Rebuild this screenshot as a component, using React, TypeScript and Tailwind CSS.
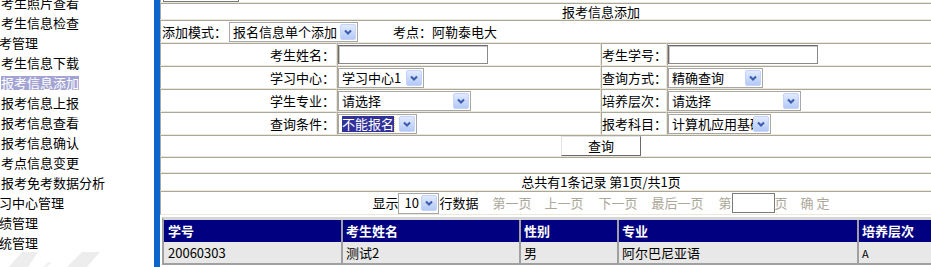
import React from "react";

type MenuItem = { text: string; sub?: boolean; active?: boolean };

const menu: MenuItem[] = [
  { text: "考生照片查看", sub: true },
  { text: "考生信息检查", sub: true },
  { text: "报考管理" },
  { text: "考生信息下载", sub: true },
  { text: "报考信息添加", sub: true, active: true },
  { text: "报考信息上报", sub: true },
  { text: "报考信息查看", sub: true },
  { text: "报考信息确认", sub: true },
  { text: "考点信息变更", sub: true },
  { text: "报考免考数据分析", sub: true },
  { text: "学习中心管理" },
  { text: "成绩管理" },
  { text: "系统管理" },
];

// inset cell border, like an old table border=1
const cellBorder =
  "border border-t-[#aca899] border-l-[#aca899] border-b-[#ebe8d9] border-r-[#ebe8d9]";

function Arrow() {
  return (
    <span className="flex h-[16px] w-[16px] shrink-0 items-center justify-center rounded-[2px] border border-[#c3d3fd] bg-linear-to-b from-[#e2eafe] to-[#b4c9f6]">
      <svg width="8" height="6" viewBox="0 0 8 6">
        <path d="M1 1.5 L4 4.5 L7 1.5" fill="none" stroke="#3a5cae" strokeWidth="2" />
      </svg>
    </span>
  );
}

function Select({ className, children }: { className: string; children: React.ReactNode }) {
  return (
    <div className={`flex h-[20px] shrink-0 items-center border border-[#a7a7a7] bg-white pl-[3px] pr-[1px] ${className}`}>
      <span className="min-w-0 flex-1 overflow-hidden whitespace-nowrap leading-[16px]">{children}</span>
      <Arrow />
    </div>
  );
}

function TextInput({ className }: { className: string }) {
  return (
    <div className={`h-[19px] border border-[#8a8a8a] border-t-[#6a6a6a] border-l-[#6a6a6a] bg-white shadow-[inset_1px_1px_0_#c8c8c8] ${className}`} />
  );
}

function FormRow({
  label1,
  field1,
  label2,
  field2,
}: {
  label1: string;
  field1: React.ReactNode;
  label2: string;
  field2: React.ReactNode;
}) {
  return (
    <div className="flex h-[23px]">
      <div className={`${cellBorder} flex w-[177px] items-center justify-end pr-[1px] leading-[16px]`}>{label1}</div>
      <div className={`${cellBorder} flex w-[264px] items-center`}>{field1}</div>
      <div className={`${cellBorder} flex w-[66px] items-center whitespace-nowrap leading-[16px]`}>{label2}</div>
      <div className={`${cellBorder} flex flex-1 items-center`}>{field2}</div>
    </div>
  );
}

function Sidebar() {
  return (
    <aside className="w-[154px] shrink-0 overflow-hidden">
      <ul className="-mt-[7px]">
        {menu.map((item) => (
          <li
            key={item.text}
            className={`flex h-[20px] items-center whitespace-nowrap ${item.sub ? "ml-[1px]" : "-ml-[14px]"}`}
          >
            {item.active ? (
              <span className="h-[14px] bg-[#a4a4d4] leading-[14px] text-white">{item.text}</span>
            ) : (
              <span className="leading-[16px]">{item.text}</span>
            )}
          </li>
        ))}
      </ul>
      {/* faint watermark at the bottom */}
      <svg width="154" height="20" viewBox="0 0 154 20" className="-mt-[3px]">
        <polygon points="6,20 22,2 38,2 26,20" fill="#ededed" />
        <polygon points="64,20 82,2 100,2 84,20" fill="#ededed" />
        <polygon points="42,18 48,12 52,12 46,18" fill="#f2f2f2" />
      </svg>
    </aside>
  );
}

export default function App() {
  const grey = "text-[#aca899]";

  return (
    <div className="flex h-[267px] w-[931px] overflow-hidden bg-white font-['SimSun','Noto_Sans_CJK_SC',sans-serif] text-[13px] text-black">
      <Sidebar />
      <div className="w-[6px] shrink-0 bg-[#0c66cc]" />

      <main className="min-w-0 flex-1 overflow-hidden">
        <div className="w-[882px]">
          {/* button row, mostly scrolled away */}
          <div className="h-[3px] border-b border-l border-b-[#ebe8d9] border-l-[#aca899]">
            <div className="ml-[2px] h-[2px] w-[76px] border-x border-b border-[#7a7a7a] bg-white" />
          </div>

          <div className={`${cellBorder} flex h-[17px] items-center justify-center leading-[15px]`}>报考信息添加</div>

          <div className={`${cellBorder} flex h-[23px] items-center pl-[1px] leading-[16px]`}>
            <span className="whitespace-nowrap">添加模式：</span>
            <Select className="ml-[2px] w-[129px]">报名信息单个添加</Select>
            <span className="ml-[35px] whitespace-nowrap">考点：阿勒泰电大</span>
          </div>

          <FormRow
            label1="考生姓名："
            field1={<TextInput className="w-[150px]" />}
            label2="考生学号："
            field2={<TextInput className="w-[150px]" />}
          />
          <FormRow
            label1="学习中心："
            field1={<Select className="w-[86px]">学习中心1</Select>}
            label2="查询方式："
            field2={<Select className="w-[95px]">精确查询</Select>}
          />
          <FormRow
            label1="学生专业："
            field1={<Select className="w-[133px]">请选择</Select>}
            label2="培养层次："
            field2={<Select className="w-[133px]">请选择</Select>}
          />
          <FormRow
            label1="查询条件："
            field1={
              <Select className="w-[79px]">
                <span className="bg-[#31319a] text-white outline-1 outline-dotted outline-[#d8d870]">不能报名</span>
              </Select>
            }
            label2="报考科目："
            field2={<Select className="w-[103px]">计算机应用基础</Select>}
          />

          <div className={`${cellBorder} flex h-[22px] items-center justify-center`}>
            <button className="h-[20px] w-[80px] border border-t-[#e4e4e4] border-l-[#e4e4e4] border-r-[#6a6a6a] border-b-[#6a6a6a] bg-white leading-[16px]">
              查询
            </button>
          </div>

          <div className={`${cellBorder} h-[16px]`} />

          <div className={`${cellBorder} flex h-[18px] items-center justify-center whitespace-nowrap leading-[16px]`}>
            总共有1条记录 第1页/共1页
          </div>

          <div className={`${cellBorder} flex h-[24px] items-center justify-center whitespace-nowrap leading-[16px]`}>
            <span>显示</span>
            <Select className="h-[21px] w-[41px] pl-[5px]">10</Select>
            <span>行数据</span>
            <span className={`ml-[14px] ${grey}`}>第一页</span>
            <span className={`ml-[13px] ${grey}`}>上一页</span>
            <span className={`ml-[15px] ${grey}`}>下一页</span>
            <span className={`ml-[14px] ${grey}`}>最后一页</span>
            <span className={`ml-[15px] ${grey}`}>第</span>
            <div className="h-[20px] w-[43px] border border-[#7a7a7a] bg-white" />
            <span className={grey}>页</span>
            <span className={`ml-[13px] ${grey}`}>确&nbsp;定</span>
          </div>

          {/* result grid */}
          <div className="ml-[2px] mt-[2px] w-[880px] border-b-2 border-l-2 border-t-[3px] border-b-[#a0a0a0] border-l-[#a0a0a0] border-t-[#d6d6d6] leading-[16px]">
            <div className="flex h-[22px] bg-[#000080] font-bold text-white">
              <div className="flex w-[179px] items-center border-r-2 border-[#a0a0a0] pl-[4px]">学号</div>
              <div className="flex w-[178px] items-center border-r-2 border-[#a0a0a0] pl-[3px]">考生姓名</div>
              <div className="flex w-[98px] items-center border-r-2 border-[#a0a0a0] pl-[3px]">性别</div>
              <div className="flex w-[240px] items-center border-r-2 border-[#a0a0a0] pl-[3px]">专业</div>
              <div className="flex flex-1 items-center pl-[3px]">培养层次</div>
            </div>
            <div className="flex h-[21px] bg-[#e8e8e8]">
              <div className="flex w-[179px] items-center border-r-2 border-[#a0a0a0] pl-[4px]">20060303</div>
              <div className="flex w-[178px] items-center border-r-2 border-[#a0a0a0] pl-[3px]">测试2</div>
              <div className="flex w-[98px] items-center border-r-2 border-[#a0a0a0] pl-[3px]">男</div>
              <div className="flex w-[240px] items-center border-r-2 border-[#a0a0a0] pl-[3px]">阿尔巴尼亚语</div>
              <div className="flex flex-1 items-center pl-[3px] text-[11px]">A</div>
            </div>
          </div>
        </div>
      </main>
    </div>
  );
}
